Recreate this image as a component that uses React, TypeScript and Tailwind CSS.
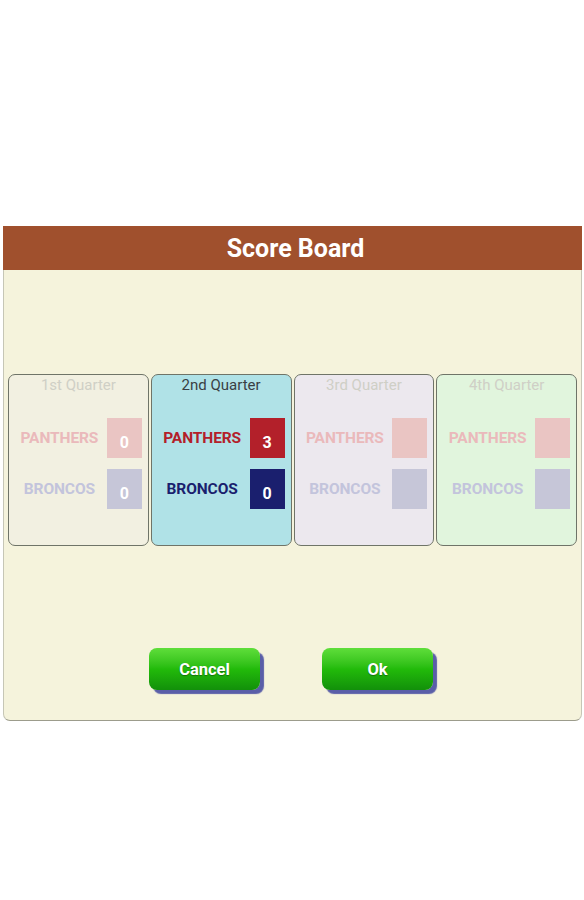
const quarters = [
  {
    label: "1st Quarter",
    active: false,
    bg: "bg-[#f2f0e1]",
    panthers: "0",
    broncos: "0",
  },
  {
    label: "2nd Quarter",
    active: true,
    bg: "bg-[#b0e2e7]",
    panthers: "3",
    broncos: "0",
  },
  {
    label: "3rd Quarter",
    active: false,
    bg: "bg-[#ece8ee]",
    panthers: "",
    broncos: "",
  },
  {
    label: "4th Quarter",
    active: false,
    bg: "bg-[#e1f5dd]",
    panthers: "",
    broncos: "",
  },
];

function QuarterCard({ q }: { q: (typeof quarters)[number] }) {
  return (
    <div
      className={`flex h-[172px] flex-col rounded-[7px] border border-[#6f7468] ${q.bg}`}
    >
      <div
        className={`pt-[1px] text-center text-[15px] leading-[19px] ${
          q.active ? "text-[#3a3f44]" : "text-[#cfcfc6]"
        }`}
      >
        {q.label}
      </div>
      <div className="mt-[23px] flex items-center">
        <div
          className={`flex-1 pl-[3px] pt-[2px] text-center text-[15.5px] font-bold tracking-[-0.1px] ${
            q.active ? "text-[#b3202a]" : "text-[#eab9bb]"
          }`}
        >
          PANTHERS
        </div>
        <div
          className={`mr-[6px] flex h-[40px] w-[35px] items-end justify-center pb-[7px] text-[16px] font-bold leading-none text-white ${
            q.active ? "bg-[#b3202a]" : "bg-[#eac5c3]"
          }`}
        >
          {q.panthers}
        </div>
      </div>
      <div className="mt-[11px] flex items-center">
        <div
          className={`flex-1 pl-[3px] pt-[2px] text-center text-[15.5px] font-bold tracking-[-0.1px] ${
            q.active ? "text-[#1a1f6e]" : "text-[#c3c4dc]"
          }`}
        >
          BRONCOS
        </div>
        <div
          className={`mr-[6px] flex h-[40px] w-[35px] items-end justify-center pb-[7px] text-[16px] font-bold leading-none text-white ${
            q.active ? "bg-[#1a1f6e]" : "bg-[#c6c6d8]"
          }`}
        >
          {q.broncos}
        </div>
      </div>
    </div>
  );
}

function GreenButton({ label }: { label: string }) {
  return (
    <button className="h-[42px] w-[111px] rounded-[8px] bg-gradient-to-b from-[#5ede3a] via-[#22bb0a] to-[#12900a] pt-[2px] text-[16.5px] font-bold text-white shadow-[4px_4px_1px_#5a5ea8] [text-shadow:0_1px_1px_rgba(0,0,0,0.35)]">
      {label}
    </button>
  );
}

export default function App() {
  return (
    <div
      className="h-[900px] w-[584px] bg-white pt-[226px]"
      style={{ fontFamily: "Roboto, 'Liberation Sans', sans-serif" }}
    >
      <div className="ml-[3px] w-[579px]">
        <div className="flex h-[44px] items-center justify-center bg-[#a0502d] pl-[6px] pt-[2px] text-[25px] font-bold text-white">
          Score Board
        </div>
        <div className="h-[451px] rounded-b-[7px] border border-t-0 border-[#c6c6b6] border-b-[#9c9c8c] bg-[#f5f3dc] px-[4px] pt-[104px]">
          <div className="grid grid-cols-4 gap-[2px]">
            {quarters.map((q) => (
              <QuarterCard key={q.label} q={q} />
            ))}
          </div>
          <div className="mt-[102px] flex justify-center gap-[62px] pr-[3px]">
            <GreenButton label="Cancel" />
            <GreenButton label="Ok" />
          </div>
        </div>
      </div>
    </div>
  );
}
